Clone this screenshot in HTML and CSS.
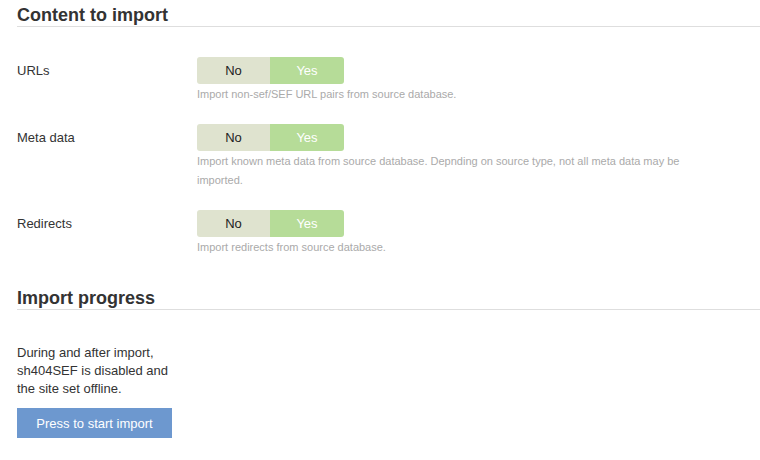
FILE: index.html
```html
<!DOCTYPE html>
<html lang="en">
<head>
  <meta charset="UTF-8">
  <title>Import</title>
  <link rel="stylesheet" href="styles.css">
</head>
<body>
  <!-- Content to import -->
  <fieldset class="section">
    <h2 class="legend">Content to import</h2>

    <div class="control-group">
      <label class="control-label">URLs</label>
      <div class="controls">
        <div class="toggle">
          <span class="opt opt-no">No</span>
          <span class="opt opt-yes">Yes</span>
        </div>
        <p class="help">Import non-sef/SEF URL pairs from source database.</p>
      </div>
    </div>

    <div class="control-group">
      <label class="control-label">Meta data</label>
      <div class="controls">
        <div class="toggle">
          <span class="opt opt-no">No</span>
          <span class="opt opt-yes">Yes</span>
        </div>
        <p class="help">Import known meta data from source database. Depnding on source type, not all meta data may be imported.</p>
      </div>
    </div>

    <div class="control-group">
      <label class="control-label">Redirects</label>
      <div class="controls">
        <div class="toggle">
          <span class="opt opt-no">No</span>
          <span class="opt opt-yes">Yes</span>
        </div>
        <p class="help">Import redirects from source database.</p>
      </div>
    </div>
  </fieldset>

  <!-- Import progress -->
  <fieldset class="section">
    <h2 class="legend">Import progress</h2>
    <p class="note">During and after import, sh404SEF is disabled and the site set offline.</p>
    <button class="start-btn">Press to start import</button>
  </fieldset>
</body>
</html>
```

FILE: styles.css
```css
body {
  font-family: "Liberation Sans", Arial, sans-serif;
  font-size: 13px;
  color: #333;
  margin: 0;
  padding: 4px 0 0 17px;
}
.section {
  border: 0;
  margin: 0;
  padding: 0;
}
.section + .section {
  margin-top: 30px;
}
.legend {
  font-size: 18px;
  font-weight: bold;
  line-height: 22px;
  margin: 0;
  color: #333;
  border-bottom: 1px solid #dedede;
}
.control-group {
  display: flex;
  margin-top: 20px;
}
.section .control-group:first-of-type {
  margin-top: 30px;
}
.control-label {
  width: 180px;
  flex-shrink: 0;
  line-height: 27px;
}
.controls {
  width: 500px;
}
.toggle {
  display: inline-flex;
  border-radius: 3px;
  overflow: hidden;
  height: 27px;
  line-height: 27px;
}
.opt {
  text-align: center;
  font-size: 13px;
}
.opt-no {
  width: 73px;
  background: #dfe3cf;
  color: #222;
}
.opt-yes {
  width: 74px;
  background: #b6dc98;
  color: #fff;
}
.help {
  margin: 1px 0 0;
  font-size: 11px;
  line-height: 19px;
  color: #aaa;
}
.note {
  width: 160px;
  margin: 34px 0 0;
  line-height: 18px;
}
.start-btn {
  margin-top: 10px;
  width: 155px;
  height: 30px;
  border: 0;
  background: #6d98cf;
  color: #fff;
  font-family: inherit;
  font-size: 13px;
  cursor: pointer;
}
```
